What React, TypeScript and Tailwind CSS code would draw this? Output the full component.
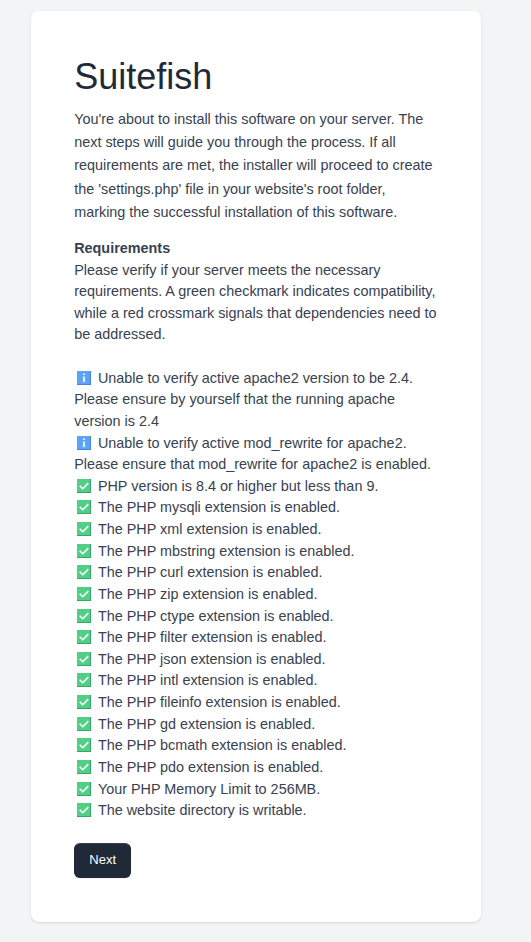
const names = ['mysqli', 'xml', 'mbstring', 'curl', 'zip', 'ctype', 'filter', 'json', 'intl', 'fileinfo', 'gd', 'bcmath', 'pdo'];
const checks = [
  'PHP version is 8.4 or higher but less than 9.',
  ...names.map((n) => `The PHP ${n} extension is enabled.`),
  'Your PHP Memory Limit to 256MB.',
  'The website directory is writable.',
];

function Info() {
  return (
    <svg className="ml-[3px] mr-[6.7px] inline-block h-3.5 w-3.5 align-[-2px]" viewBox="0 0 14 14">
      <rect width="14" height="14" fill="#3f86e0" />
      <rect width="13" height="13" fill="#5ba3f8" />
      <path d="M7 5.5v5.5M7 2.5v1.6" stroke="#fff" strokeWidth="1.7" fill="none" />
      <path d="M5.5 5.8h1.5M5.2 10.8h3.6" stroke="#b5d5ff" strokeWidth="0.6" fill="none" />
    </svg>
  );
}

function Check() {
  return (
    <svg className="ml-[3px] mr-[6.7px] inline-block h-3.5 w-3.5 align-[-2px]" viewBox="0 0 14 14">
      <rect width="14" height="14" fill="#35a869" />
      <rect width="13" height="13" fill="#51cf87" />
      <path d="M2.7 6.7l3 3 5.6-5.6" stroke="#fff" strokeWidth="1.6" fill="none" />
    </svg>
  );
}

export default function App() {
  return (
    <div className="h-[942px] bg-[#f3f4f6] pl-[31px] pt-[11px] font-['Liberation_Sans',Arial,sans-serif] text-[#374151]">
      <main className="h-[911px] w-[450px] rounded-lg bg-white px-[43.2px] pt-[46px] shadow">
        <h1 className="text-[36px] leading-10 text-[#1f2937]">Suitefish</h1>
        <p className="mt-[11px] whitespace-nowrap text-[14.4px] leading-[23.2px]">
          You're about to install this software on your server. The<br />
          next steps will guide you through the process. If all<br />
          requirements are met, the installer will proceed to create<br />
          the 'settings.php' file in your website's root folder,<br />
          marking the successful installation of this software.
        </p>
        <div className="mt-[13.95px] whitespace-nowrap text-[14.4px] leading-[21.625px]">
          <strong>Requirements</strong><br />
          Please verify if your server meets the necessary<br />
          requirements. A green checkmark indicates compatibility,<br />
          while a red crossmark signals that dependencies need to<br />
          be addressed.<br /><br />
          <Info />Unable to verify active apache2 version to be 2.4.<br />
          Please ensure by yourself that the running apache<br />
          version is 2.4<br />
          <Info />Unable to verify active mod_rewrite for apache2.<br />
          Please ensure that mod_rewrite for apache2 is enabled.
          {checks.map((c) => <div key={c}><Check />{c}</div>)}
        </div>
        <button className="mt-[21.4px] h-[35px] w-[57px] rounded-md border border-[#1f2937] border-t-[#33414f] bg-[#1f2937] pb-[2px] text-[13px] font-medium text-white shadow-xs">Next</button>
      </main>
    </div>
  );
}
